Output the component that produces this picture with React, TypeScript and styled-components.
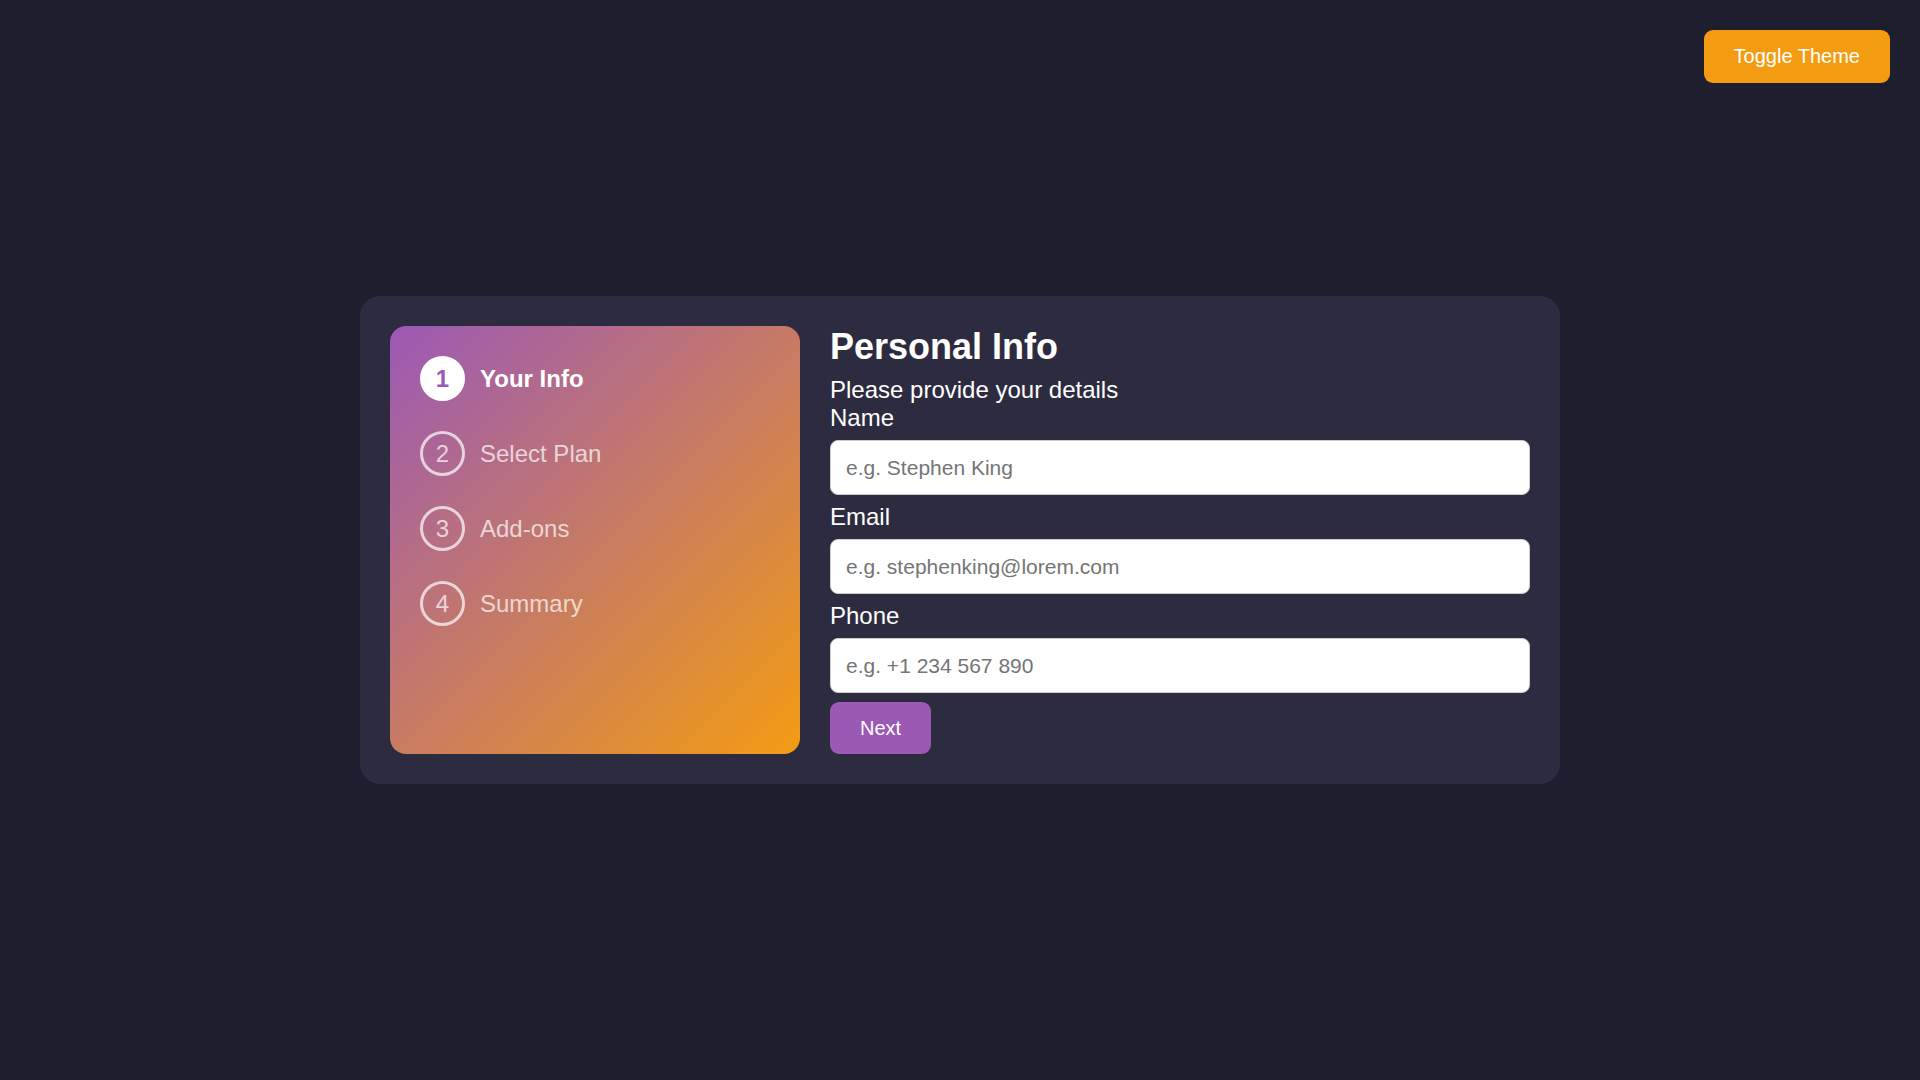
import styled, { createGlobalStyle } from "styled-components";

const STEPS = ["Your Info", "Select Plan", "Add-ons", "Summary"];

const FIELDS = [
  { label: "Name", type: "text", placeholder: "e.g. Stephen King" },
  { label: "Email", type: "email", placeholder: "e.g. stephenking@lorem.com" },
  { label: "Phone", type: "tel", placeholder: "e.g. +1 234 567 890" },
];

const GlobalStyle = createGlobalStyle`
  * {
    box-sizing: border-box;
  }
  html, body {
    margin: 0;
    padding: 0;
    background: #1f1e2e;
    font-family: "Liberation Sans", Arial, sans-serif;
    color: #ffffff;
  }
`;

const App = () => {
  const currentStep = 1;

  return (
    <>
      <GlobalStyle />
      <Page>
        <ToggleButton type="button">Toggle Theme</ToggleButton>
        <Card>
          <Sidebar>
            {STEPS.map((step, index) => (
              <Step key={step} $active={index + 1 === currentStep}>
                <StepNumber $active={index + 1 === currentStep}>
                  {index + 1}
                </StepNumber>
                <StepLabel $active={index + 1 === currentStep}>{step}</StepLabel>
              </Step>
            ))}
          </Sidebar>
          <Form onSubmit={(e) => e.preventDefault()}>
            <Heading>Personal Info</Heading>
            <Subtitle>Please provide your details</Subtitle>
            {FIELDS.map((field) => (
              <Field key={field.label}>
                <Label>{field.label}</Label>
                <Input type={field.type} placeholder={field.placeholder} />
              </Field>
            ))}
            <NextButton type="submit">Next</NextButton>
          </Form>
        </Card>
      </Page>
    </>
  );
};

export default App;

const Page = styled.div`
  width: 100%;
  min-height: 100vh;
  display: flex;
  justify-content: center;
  align-items: center;
  background: #1f1e2e;
`;

const ToggleButton = styled.button`
  position: fixed;
  top: 30px;
  right: 30px;
  padding: 15px 30px;
  border: none;
  border-radius: 9px;
  background: #f39c12;
  color: #ffffff;
  font-family: "Liberation Sans", Arial, sans-serif;
  font-size: 20px;
  line-height: 23px;
  cursor: pointer;
`;

const Card = styled.div`
  width: 1200px;
  height: 488px;
  display: flex;
  gap: 30px;
  padding: 30px;
  background: #2d2b3f;
  border-radius: 20px;
`;

const Sidebar = styled.div`
  width: 410px;
  flex-shrink: 0;
  display: flex;
  flex-direction: column;
  gap: 30px;
  padding: 30px;
  border-radius: 16px;
  background: linear-gradient(135deg, #9b59b6 0%, #f39c12 100%);
`;

const Step = styled.div<{ $active: boolean }>`
  display: flex;
  align-items: center;
  gap: 15px;
  opacity: ${({ $active }) => ($active ? 1 : 0.7)};
`;

const StepNumber = styled.div<{ $active: boolean }>`
  width: 45px;
  height: 45px;
  display: flex;
  justify-content: center;
  align-items: center;
  border-radius: 50%;
  border: 3px solid #ffffff;
  background: ${({ $active }) => ($active ? "#ffffff" : "transparent")};
  color: ${({ $active }) => ($active ? "#9b59b6" : "#ffffff")};
  font-size: 24px;
  font-weight: ${({ $active }) => ($active ? 700 : 400)};
`;

const StepLabel = styled.span<{ $active: boolean }>`
  font-size: 24px;
  font-weight: ${({ $active }) => ($active ? 700 : 400)};
`;

const Form = styled.form`
  flex: 1;
  display: flex;
  flex-direction: column;
  align-items: flex-start;
`;

const Heading = styled.h2`
  margin: 0 0 8px;
  font-size: 36px;
  line-height: 41px;
  font-weight: 700;
`;

const Subtitle = styled.p`
  margin: 1px 0 0;
  font-size: 24px;
  line-height: 28px;
`;

const Field = styled.div`
  width: 100%;
  display: flex;
  flex-direction: column;
  gap: 8px;
  margin-bottom: 8px;
`;

const Label = styled.label`
  font-size: 24px;
  line-height: 28px;
`;

const Input = styled.input`
  width: 100%;
  height: 55px;
  padding: 0 15px;
  border: 1px solid #cccccc;
  border-radius: 8px;
  background: #ffffff;
  color: #222222;
  font-family: "Liberation Sans", Arial, sans-serif;
  font-size: 21px;
  outline: none;

  &::placeholder {
    color: #757575;
  }
`;

const NextButton = styled.button`
  margin-top: 1px;
  height: 52px;
  padding: 0 30px;
  border: none;
  border-radius: 9px;
  background: #9b59b6;
  color: #ffffff;
  font-family: "Liberation Sans", Arial, sans-serif;
  font-size: 20px;
  cursor: pointer;
`;
